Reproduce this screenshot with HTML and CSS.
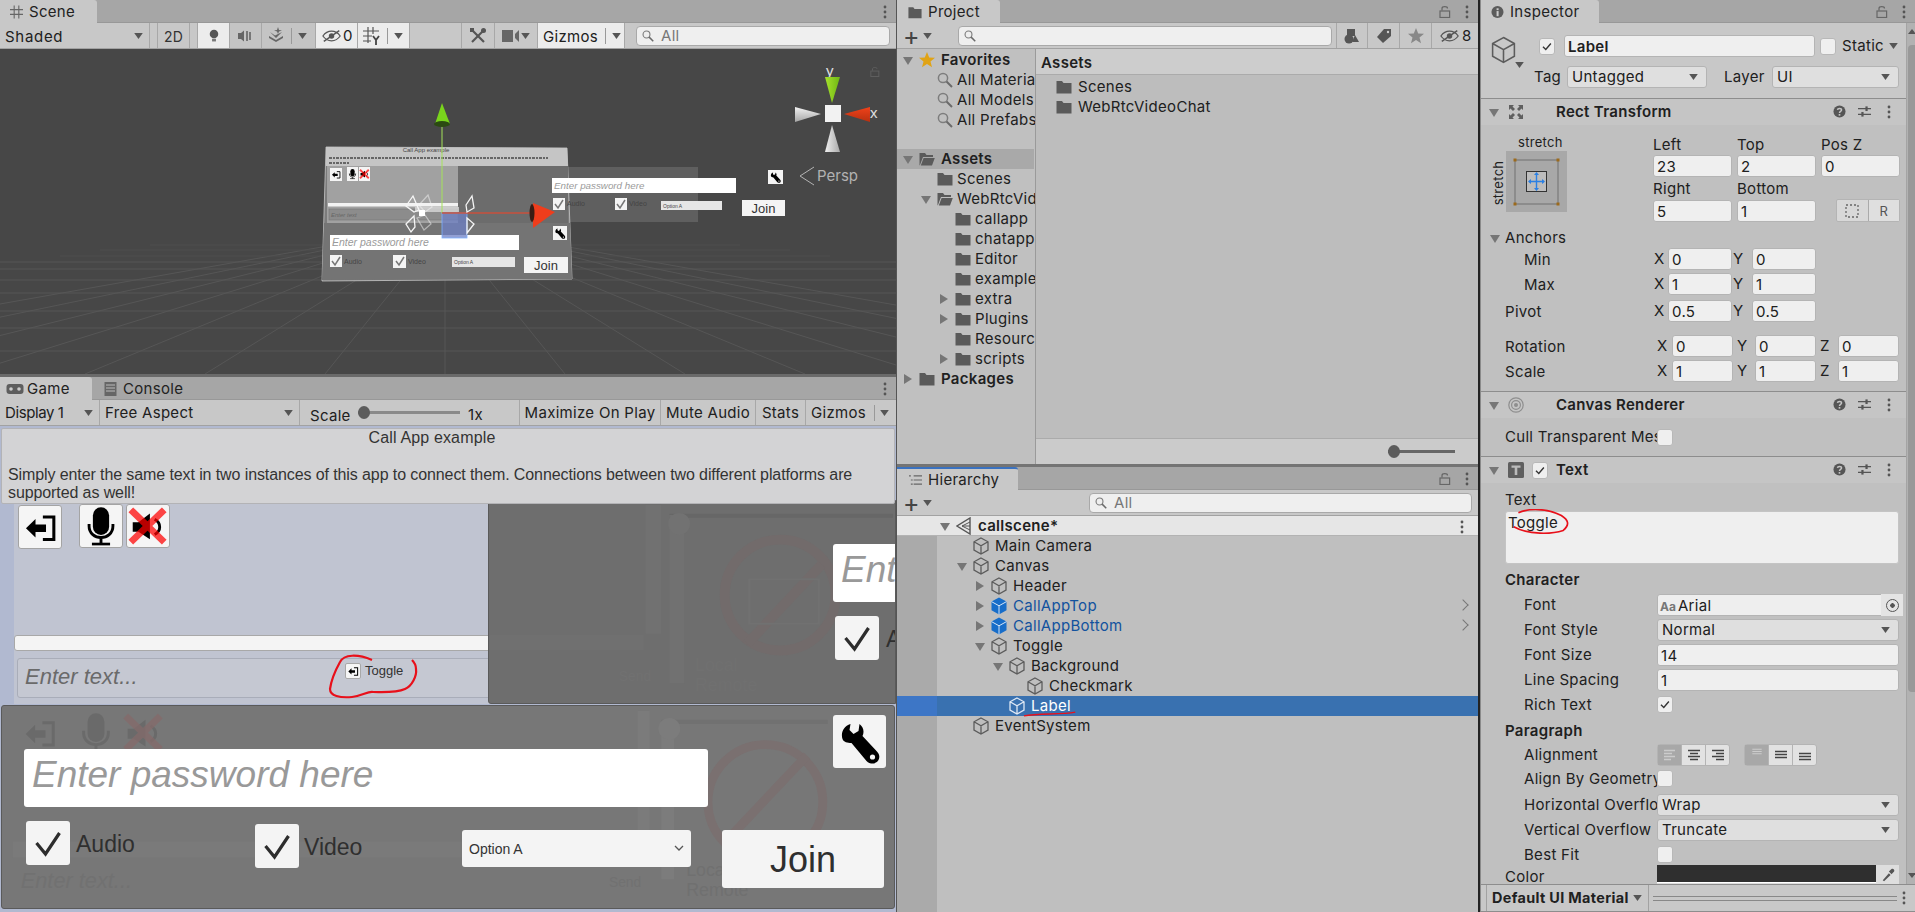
FILE: index.html
```html
<!DOCTYPE html>
<html lang="en">
<head>
<meta charset="utf-8">
<title>Unity Editor</title>
<link rel="stylesheet" href="styles.css">
</head>
<body>
<svg class="defs" width="0" height="0" aria-hidden="true">
  <defs>
    <linearGradient id="cone-h" x1="0" x2="1" y1="0" y2="0"><stop offset="0" stop-color="#f0f0f0"/><stop offset="1" stop-color="#a9a9a9"/></linearGradient>
    <linearGradient id="cone-v" x1="0" x2="0" y1="0" y2="1"><stop offset="0" stop-color="#f2f2f2"/><stop offset="1" stop-color="#a6a6a6"/></linearGradient>
    <linearGradient id="cone-r" x1="0" x2="0" y1="0" y2="1"><stop offset="0" stop-color="#f0421a"/><stop offset="1" stop-color="#b83010"/></linearGradient>
    <linearGradient id="cone-g" x1="0" x2="1" y1="0" y2="0"><stop offset="0" stop-color="#a6e22c"/><stop offset="1" stop-color="#6fb714"/></linearGradient>
  </defs>
  <symbol id="cube" viewBox="0 0 16 18"><path d="M8 1 15 4.800V13L8 17 1 13V4.800ZM1 4.800 8 8.800 15 4.800M8 8.800V17" fill="none" stroke="#5c5c5c" stroke-width="1.300"/></symbol>
  <symbol id="cube-w" viewBox="0 0 16 18"><path d="M8 1 15 4.800V13L8 17 1 13V4.800ZM1 4.800 8 8.800 15 4.800M8 8.800V17" fill="none" stroke="#dfe8f5" stroke-width="1.300"/></symbol>
  <symbol id="cube-b" viewBox="0 0 16 18"><path d="M8 .5 15.500 4.600V13.200L8 17.500.5 13.200V4.600Z" fill="#176dc9"/><path d="M.5 4.600 8 8.800 15.500 4.600M8 8.800V17.500" fill="none" stroke="#d5e5f5" stroke-width="1"/></symbol>
  <symbol id="folder" viewBox="0 0 16 14"><path d="M.5 1H6L7.500 3H15.500V13.500H.5Z" fill="#5a5a5a"/></symbol>
  <symbol id="folder-o" viewBox="0 0 16 14"><path d="M.5 1H6L7.500 3H14V5H4L.9 13.200H.5ZM4.600 6H15.800L13 13.500H1.800Z" fill="#5a5a5a"/></symbol>
  <symbol id="mag" viewBox="0 0 16 16"><circle cx="6" cy="6" r="4.600" fill="none" stroke="#7d7d7d" stroke-width="1.500"/><path d="M9.500 9.500 15 15" stroke="#6a6a6a" stroke-width="2"/></symbol>
  <symbol id="lock" viewBox="0 0 12 13"><path d="M3 5.500V3.400C3 1 8.500 1 8.500 3.400" fill="none" stroke="#666" stroke-width="1.200"/><rect x="1" y="6" width="9.600" height="6.500" fill="none" stroke="#666" stroke-width="1.200"/></symbol>
  <symbol id="dots" viewBox="0 0 4 14"><circle cx="2" cy="2" r="1.400" fill="#555"/><circle cx="2" cy="7" r="1.400" fill="#555"/><circle cx="2" cy="12" r="1.400" fill="#555"/></symbol>
  <symbol id="help" viewBox="0 0 14 14"><circle cx="7" cy="7" r="6.500" fill="#555"/><path d="M4.800 5.300C5 3.200 9.200 3.200 9.200 5.400 9.200 7 7 6.800 7 8.600" fill="none" stroke="#c4c4c4" stroke-width="1.600"/><rect x="6.100" y="9.700" width="1.800" height="1.800" fill="#c4c4c4"/></symbol>
  <symbol id="sliders" viewBox="0 0 14 13"><path d="M0 3.500H14M0 9.500H14" stroke="#555" stroke-width="1.400"/><rect x="8" y="1" width="2.400" height="5" fill="#555"/><rect x="3.600" y="7" width="2.400" height="5" fill="#555"/></symbol>
  <symbol id="check" viewBox="0 0 16 16"><path d="M3.400 8.400 6.600 11.400 12.400 4.600" fill="none" stroke="#333" stroke-width="1.600"/></symbol>
  <symbol id="bigcheck" viewBox="0 0 43 44"><path d="M10 22 19 33 33 12" fill="none" stroke="#2d2d2d" stroke-width="3.200"/></symbol>
  <symbol id="exit" viewBox="0 0 44 44"><path d="M7.300 23.300 17.300 13.500V19.300H28.300V27.300H17.300V33Z" fill="#000"/><path d="M25 11.500H36.500V35H25" fill="none" stroke="#000" stroke-width="3.200"/></symbol>
  <symbol id="mic" viewBox="0 0 44 44"><rect x="13.500" y="2.400" width="17" height="29" rx="8.500" fill="#000"/><path d="M9.500 20V22C9.500 38 34.500 38 34.500 22V20" fill="none" stroke="#000" stroke-width="3"/><path d="M22 35V40" stroke="#000" stroke-width="3"/><rect x="12.500" y="39.500" width="19" height="2.800" fill="#000"/></symbol>
  <symbol id="mute" viewBox="0 0 44 44"><path d="M6 18H12L24 9V36L12 28H6Z" fill="#000"/><path d="M29 15C36 19 36 27 29 31" fill="none" stroke="#000" stroke-width="3"/><path d="M4 5 39 39M39 5 4 39" stroke="#ff0000" stroke-opacity=".72" stroke-width="7"/></symbol>
  <symbol id="wrench" viewBox="0 0 52 53"><path d="M17 9C10 11 7 18 9 24 10 27 14 28 18 28L33 46C37 50 43 49 45 45 47 41 45 38 43 36L29 21C31 17 30 12 26 9L25 16 20 19 16 15Z" fill="#000"/><circle cx="39" cy="42" r="2.600" fill="#f4f4f4"/></symbol>
  <symbol id="arrow-d" viewBox="0 0 10 7"><path d="M0 0H10L5 7Z" fill="currentColor"/></symbol>
</svg>

<div class="app">

  <!-- Left column -->
  <div class="col col-left">
    <section class="panel">
      <div class="tabbar">
        <div class="tab tab-scene">
          <svg class="tab-ico" viewBox="0 0 14 14"><path d="M4.500 0V14M9.500 0V14M0 4.500H14M0 9.500H14" stroke="#666" stroke-width="1.200"/></svg>
          <span>Scene</span>
        </div>
        <svg class="tabdots"><use href="#dots"/></svg>
      </div>
      <div class="toolbar">
        <div class="tb tb-shaded"><span>Shaded</span><svg class="tri"><use href="#arrow-d"/></svg></div>
        <div class="tb tb-gap8"></div>
        <div class="tb tb-2d">2D</div>
        <div class="tb tb-gap8 nob"></div>
        <div class="tb tb-32 on"><svg viewBox="0 0 14 18" class="ic14"><circle cx="7" cy="6.500" r="5.500" fill="#555"/><rect x="4.500" y="12.500" width="5" height="3.500" fill="#777"/></svg></div>
        <div class="tb tb-32 dark"><svg viewBox="0 0 18 16" class="ic18"><path d="M1 5H4L7 2.500V13.500L4 11H1Z" fill="#666"/><path d="M10 3V13M13 4V12" stroke="#777" stroke-width="2"/></svg></div>
        <div class="tb tb-54 dark"><svg viewBox="0 0 18 18" class="ic18"><path d="M2 9 9 13 16 9V11L9 15 2 11Z" fill="#666"/><path d="M3 5 8 8.500 15 5 9 11Z" fill="#666"/><path d="M11 0 12 3 15 3.500 12 4.500 11 7 10 4.500 7 3.500 10 3Z" fill="#666"/></svg><i class="vsep"></i><svg class="tri"><use href="#arrow-d"/></svg></div>
        <div class="tb tb-42 on"><svg viewBox="0 0 22 16" class="ic22"><path d="M1 8C6 1 15 1 20 8 15 15 6 15 1 8Z" fill="none" stroke="#555" stroke-width="1.400"/><circle cx="10.500" cy="8" r="3" fill="#555"/><path d="M2 14 19 2" stroke="#555" stroke-width="1.600"/></svg><span class="n0">0</span></div>
        <div class="tb tb-52 on"><svg viewBox="0 0 18 18" class="ic18"><path d="M5 0V16M10 0V7M0 4H16M0 9H9M0 14H8" stroke="#555" stroke-width="1.200"/><path d="M10 9 13 13 16 9M13 13V18" fill="none" stroke="#444" stroke-width="1.800"/></svg><i class="vsep"></i><svg class="tri"><use href="#arrow-d"/></svg></div>
        <div class="tb tb-fill"></div>
        <div class="tb tb-33"><svg viewBox="0 0 18 18" class="ic18"><path d="M3 15 15 3" stroke="#555" stroke-width="2.200"/><path d="M3 3 15 15" stroke="#555" stroke-width="2.200"/><circle cx="14.500" cy="3.500" r="2.500" fill="#555"/><rect x="1" y="1" width="4" height="4" fill="#555"/></svg></div>
        <div class="tb tb-43"><svg viewBox="0 0 18 14" class="ic18"><rect y="1" width="11" height="12" fill="#666"/><path d="M13 5 17 1V13L13 9Z" fill="#666"/></svg><svg class="tri"><use href="#arrow-d"/></svg></div>
        <div class="tb tb-87 on"><span>Gizmos</span><i class="vsep"></i><svg class="tri"><use href="#arrow-d"/></svg></div>
        <div class="searchbox sb-scene"><svg class="mag"><use href="#mag"/></svg><span>All</span></div>
      </div>
      <div class="viewport">
        <svg class="scene" viewBox="0 49 896 325">
          <rect x="0" y="49" width="896" height="325" fill="#474747"/>
          <path class="grid" d="M429 245 325 374M413 245 205 374M397 245 85 374M381 245-35 374M365 245-155 374M349 245-275 374M333 245-395 374M461 245 565 374M477 245 685 374M493 245 805 374M509 245 925 374M525 245 1045 374M541 245 1165 374M557 245 1285 374M445 245V374"/>
          <path class="grid" d="M0 262H896M0 269H896M0 280H896M0 293H896M0 311H896M0 328H896M0 351H896"/>
          <path class="gridf" d="M150 245H740M100 250H790M60 256H830"/>
          <!-- far panel -->
          <rect x="568" y="167" width="130" height="55" fill="#5f5f5f"/>
          <!-- main plane -->
          <polygon points="326,147 567,148 572,279 322,281" fill="#7b7b7b" stroke="#c8c8c8" stroke-width=".8"/>
          <polygon points="326,147 567,148 568,166 326,166" fill="#c5c5c5"/>
          <rect x="327" y="166" width="131" height="57" fill="#a1a1a1"/>
          <rect x="458" y="166" width="110" height="57" fill="#6c6c6c"/>
          <polygon points="324,223 570,223 572,279 322,280" fill="#747474"/>
          <text class="m" x="426" y="152">Call App example</text>
          <path class="tinyl" d="M329 158H548M329 163H350" />
          <rect class="wbtn" x="330" y="168" width="12" height="13"/>
          <use href="#exit" x="330" y="168" width="12" height="13"/>
          <rect class="wbtn" x="347" y="167" width="11" height="14"/>
          <use href="#mic" x="347" y="167" width="11" height="14"/>
          <rect class="wbtn" x="359" y="167" width="11" height="14"/>
          <use href="#mute" x="359" y="167" width="11" height="14"/>
          <rect x="328" y="203" width="130" height="3.500" fill="#f2f2f2"/>
          <rect x="329" y="209" width="129" height="11" fill="#8c8c8c" stroke="#777" stroke-width=".6"/>
          <text class="m2" x="331" y="217">Enter text</text>
          <!-- bottom panel widgets -->
          <rect x="330" y="235" width="189" height="15" fill="#fff"/>
          <text class="ph" x="332" y="246">Enter password here</text>
          <rect class="wbtn" x="330" y="255" width="12" height="12"/><path class="ck" d="M332 261 335 265 340 257"/>
          <text class="m3" x="344" y="264">Audio</text>
          <rect class="wbtn" x="393" y="255" width="13" height="13"/><path class="ck" d="M396 261 399 265 404 257"/>
          <text class="m3" x="408" y="264">Video</text>
          <rect x="452" y="257" width="63" height="10" fill="#e6e6e6"/>
          <text class="m2d" x="454" y="264">Option A</text>
          <rect class="wbtn" x="524" y="257" width="44" height="16"/>
          <text class="join" x="546" y="270">Join</text>
          <rect class="wbtn" x="553" y="226" width="14" height="14"/>
          <use href="#wrench" x="553" y="226" width="14" height="14"/>
          <!-- far widgets -->
          <rect x="552" y="178" width="184" height="15" fill="#fff"/>
          <text class="ph ph2" x="554" y="189">Enter password here</text>
          <rect class="wbtn" x="553" y="198" width="12" height="12"/><path class="ck" d="M555 204 558 208 563 200"/>
          <text class="m3" x="567" y="206">Audio</text>
          <rect class="wbtn" x="615" y="198" width="12" height="12"/><path class="ck" d="M617 204 620 208 625 200"/>
          <text class="m3" x="629" y="206">Video</text>
          <rect x="661" y="201" width="61" height="9" fill="#e6e6e6"/>
          <text class="m2d" x="663" y="208">Option A</text>
          <rect class="wbtn" x="742" y="200" width="43" height="16"/>
          <text class="join" x="763.500" y="213">Join</text>
          <rect class="wbtn" x="768" y="170" width="15" height="14"/>
          <use href="#wrench" x="768" y="170" width="15" height="14"/>
          <!-- handles -->
          <rect x="442" y="213" width="25" height="25" fill="#6d80c5" fill-opacity=".75" stroke="#7db0ff" stroke-width=".8"/>
          <rect x="415" y="207" width="44" height="5" fill="#d8d8d8" opacity=".8"/>
          <path d="M442 125V213" stroke="#a4e35a" stroke-width="1"/>
          <path d="M442 213H533" stroke="#c9503c" stroke-width="1.500"/>
          <polygon points="442,103 435,124 450,124" fill="#79d41c"/>
          <ellipse cx="442" cy="124" rx="8" ry="3" fill="#2b4a12"/>
          <polygon points="555,212 533,203 533,228" fill="#ef3d1c"/>
          <ellipse cx="532" cy="213" rx="2.500" ry="9" fill="#3a1d14"/>
          <g fill="none" stroke="#f5f5f5" stroke-width="1.300">
            <polygon points="406,206 413,196 419,210 414,212"/>
            <polygon points="466,205 472,196 474,208 467,212"/>
            <polygon points="406,224 414,216 415,227 411,232"/>
            <polygon points="467,218 474,224 467,233"/>
            <polygon points="419,205 428,195 432,207 425,212" opacity=".5"/>
            <polygon points="417,218 425,215 431,224 424,230" opacity=".5"/>
          </g>
          <rect x="419" y="210" width="6" height="6" fill="#fff"/>
          <!-- orientation gizmo -->
          <text class="gl" x="826" y="76">y</text>
          <polygon points="825,77 840,77 832,103" fill="url(#cone-g)"/>
          <polygon points="870,107 870,122 844,114" fill="url(#cone-r)"/>
          <polygon points="795,107 795,122 821,114" fill="url(#cone-v)"/>
          <polygon points="825,152 840,152 832,125" fill="url(#cone-h)"/>
          <rect x="825" y="105" width="16" height="17" fill="#f2f2f2"/>
          <text class="gl" x="870" y="118">x</text>
          <use href="#lock" x="870" y="66" width="10" height="11" opacity=".75"/>
          <path d="M814 167 800 176 814 185" fill="none" stroke="#b4b4b4" stroke-width="1"/>
          <text class="persp" x="817" y="181">Persp</text>
        </svg>
      </div>
    </section>

    <div class="hgap"></div>

    <section class="panel panel-game">
      <div class="tabbar">
        <div class="tab tab-game">
          <svg class="tab-ico wide" viewBox="0 0 18 12"><rect x=".5" y="1" width="17" height="10" rx="3" fill="#5e5e5e"/><circle cx="5" cy="6" r="1.800" fill="#cdcdcd"/><circle cx="13" cy="6" r="1.800" fill="#cdcdcd"/></svg>
          <span>Game</span>
        </div>
        <div class="tab off tab-console">
          <svg class="tab-ico" viewBox="0 0 12 14"><rect width="12" height="14" fill="#666"/><path d="M1.500 3H10.500M1.500 6H10.500M1.500 9H10.500" stroke="#bbb"/></svg>
          <span>Console</span>
        </div>
        <svg class="tabdots"><use href="#dots"/></svg>
      </div>
      <div class="toolbar tb-game">
        <div class="tb g-disp"><span>Display 1</span><svg class="tri"><use href="#arrow-d"/></svg></div>
        <div class="tb g-aspect"><span>Free Aspect</span><svg class="tri"><use href="#arrow-d"/></svg></div>
        <div class="tb g-scale"><span class="sc-label">Scale</span><span class="sc-track"><i class="sc-knob"></i></span><span class="sc-val">1x</span></div>
        <div class="tb g-max">Maximize On Play</div>
        <div class="tb g-mute">Mute Audio</div>
        <div class="tb g-stats">Stats</div>
        <div class="tb g-giz"><span>Gizmos</span><i class="vsep"></i><svg class="tri"><use href="#arrow-d"/></svg></div>
      </div>
      <div class="game">
        <div class="g-head">
          <div class="g-title">Call App example</div>
          <div class="g-body">Simply enter the same text in two instances of this app to connect them. Connections between two different platforms are supported as well!</div>
        </div>
        <div class="g-call">
          <div class="g-btns">
            <div class="g-btn g-exit"><svg><use href="#exit"/></svg></div>
            <div class="g-btn g-mic"><svg><use href="#mic"/></svg></div>
            <div class="g-btn g-mute2"><svg><use href="#mute"/></svg></div>
          </div>
          <div class="g-progress"></div>
          <div class="g-input"><span>Enter text...</span></div>
        </div>

        <div class="g-bottom">
          <svg class="ghost" viewBox="0 0 895 204">
            <g opacity=".1">
              <use href="#exit" x="14" y="6" width="42" height="42"/>
              <use href="#mic" x="70" y="5" width="44" height="44"/>
              <use href="#mute" x="118" y="5" width="44" height="44"/>
            </g>
            <rect x="639" y="5" width="12" height="130" fill="#7b7b7b"/>
            <rect x="663" y="17" width="13" height="158" fill="#7c7c7c"/>
            <rect x="663" y="14" width="168" height="4" fill="#717171"/>
            <circle cx="671" cy="23" r="11" fill="#7c7c7c"/>
            <circle cx="768" cy="97" r="58" fill="none" stroke="#7a7070" stroke-width="9"/>
            <path d="M725 140 810 50" stroke="#7a7070" stroke-width="9"/>
            <rect x="8" y="137" width="630" height="16" fill="#7a7a7a"/>
            <text class="gh-t" x="16" y="184">Enter text...</text>
            <text class="gh-s" x="610" y="183">Send</text>
            <text class="gh-l" x="688" y="172">Local</text>
            <text class="gh-l" x="688" y="192">Remote</text>
          </svg>
          <div class="b-wrench"><svg><use href="#wrench"/></svg></div>
          <div class="b-pass"><span>Enter password here</span></div>
          <div class="b-row">
            <div class="b-check"><svg><use href="#bigcheck"/></svg></div>
            <span class="b-lab b-audio">Audio</span>
            <div class="b-check b-video"><svg><use href="#bigcheck"/></svg></div>
            <span class="b-lab b-vid">Video</span>
            <div class="b-drop"><span>Option A</span><svg viewBox="0 0 10 7"><path d="M1 1 5 5 9 1" fill="none" stroke="#555" stroke-width="1.300"/></svg></div>
            <div class="b-join">Join</div>
          </div>
        </div>

        <div class="g-right">
          <svg class="ghost" viewBox="0 0 408 204">
            <rect x="157" y="4" width="16" height="130" fill="#717171"/>
            <rect x="181" y="13" width="226" height="4" fill="#676767"/>
            <rect x="181" y="14" width="15" height="170" fill="#717171"/>
            <circle cx="191" cy="23" r="11" fill="#727272"/>
            <circle cx="293" cy="95" r="56" fill="none" stroke="#726b6b" stroke-width="10"/>
            <path d="M260 144 335 64" stroke="#726b6b" stroke-width="10"/>
            <rect x="262" y="79" width="70" height="45" fill="none" stroke="#717171" stroke-width="2"/>
            <rect x="0" y="135" width="155" height="16" fill="#707070"/>
            <text class="gh-s" x="130" y="182">Send</text>
            <text class="gh-l" x="207" y="172">Local</text>
            <text class="gh-l" x="207" y="192">Remote</text>
          </svg>
          <div class="r-pass"><span>Ent</span></div>
          <div class="r-row">
            <div class="b-check"><svg><use href="#bigcheck"/></svg></div>
            <span class="b-lab">A</span>
          </div>
        </div>

        <div class="g-toggle">
          <div class="g-tbox"><svg><use href="#exit"/></svg></div>
          <span>Toggle</span>
        </div>
        <svg class="scribble" viewBox="0 425 896 487">
          <path d="M372 659C358 653 344 653 340 661 335 670 331 681 330 688 330 695 340 697 352 696 362 695 368 690 373 691 384 691 396 692 405 688 412 685 417 675 416 668 416 664 414 661 412 659" fill="none" stroke="#e8101a" stroke-width="2.200"/>
        </svg>
      </div>
    </section>
  </div>

  <!-- Middle column -->
  <div class="col col-mid">
    <section class="panel panel-project">
      <div class="tabbar">
        <div class="tab tab-project">
          <svg class="tab-ico folder"><use href="#folder"/></svg>
          <span>Project</span>
        </div>
        <svg class="tablock"><use href="#lock"/></svg>
        <svg class="tabdots"><use href="#dots"/></svg>
      </div>
      <div class="toolbar tb-project">
        <div class="plus"><span class="plus-sign">+</span><svg class="tri"><use href="#arrow-d"/></svg></div>
        <div class="searchbox sb-project"><svg class="mag"><use href="#mag"/></svg></div>
        <div class="tb p-btn left-sep"><svg viewBox="0 0 16 16" class="ic16"><rect x="3" y="1" width="8" height="7" fill="#555"/><circle cx="5" cy="11" r="4.500" fill="#555"/><path d="M11 7 15 14H8Z" fill="#555"/></svg></div>
        <div class="tb p-btn"><svg viewBox="0 0 16 16" class="ic16"><path d="M8 1H15V8L7 15 1 9Z" fill="#555"/><circle cx="12" cy="4" r="1.200" fill="#ccc"/></svg></div>
        <div class="tb p-btn"><svg viewBox="0 0 16 16" class="ic16"><path d="M8 0 10.200 5.400 16 5.800 11.500 9.500 13 15.200 8 12.100 3 15.200 4.500 9.500 0 5.800 5.800 5.400Z" fill="#888"/></svg></div>
        <div class="tb p-eye"><svg viewBox="0 0 22 16" class="ic22"><path d="M1 8C6 1 15 1 20 8 15 15 6 15 1 8Z" fill="none" stroke="#555" stroke-width="1.400"/><circle cx="10.500" cy="8" r="3" fill="#555"/><path d="M2 14 19 2" stroke="#555" stroke-width="1.600"/></svg><span>8</span></div>
      </div>
      <div class="proj-body">
        <div class="proj-tree">
          <div class="tr bold l0"><i class="ar down"></i><svg class="ti" viewBox="0 0 16 16"><path d="M8 0 10.200 5.400 16 5.800 11.500 9.500 13 15.200 8 12.100 3 15.200 4.500 9.500 0 5.800 5.800 5.400Z" fill="#e0a315"/></svg><span>Favorites</span></div>
          <div class="tr l1"><i class="ar"></i><svg class="ti"><use href="#mag"/></svg><span>All Materials</span></div>
          <div class="tr l1"><i class="ar"></i><svg class="ti"><use href="#mag"/></svg><span>All Models</span></div>
          <div class="tr l1"><i class="ar"></i><svg class="ti"><use href="#mag"/></svg><span>All Prefabs</span></div>
          <div class="tr-gap"></div>
          <div class="tr bold l0 cur"><i class="ar down"></i><svg class="ti"><use href="#folder-o"/></svg><span>Assets</span></div>
          <div class="tr l1"><i class="ar"></i><svg class="ti"><use href="#folder"/></svg><span>Scenes</span></div>
          <div class="tr l1"><i class="ar down"></i><svg class="ti"><use href="#folder-o"/></svg><span>WebRtcVideoChat</span></div>
          <div class="tr l2"><i class="ar"></i><svg class="ti"><use href="#folder"/></svg><span>callapp</span></div>
          <div class="tr l2"><i class="ar"></i><svg class="ti"><use href="#folder"/></svg><span>chatapp</span></div>
          <div class="tr l2"><i class="ar"></i><svg class="ti"><use href="#folder"/></svg><span>Editor</span></div>
          <div class="tr l2"><i class="ar"></i><svg class="ti"><use href="#folder"/></svg><span>examples</span></div>
          <div class="tr l2"><i class="ar right"></i><svg class="ti"><use href="#folder"/></svg><span>extra</span></div>
          <div class="tr l2"><i class="ar right"></i><svg class="ti"><use href="#folder"/></svg><span>Plugins</span></div>
          <div class="tr l2"><i class="ar"></i><svg class="ti"><use href="#folder"/></svg><span>Resources</span></div>
          <div class="tr l2"><i class="ar right"></i><svg class="ti"><use href="#folder"/></svg><span>scripts</span></div>
          <div class="tr bold l0"><i class="ar right"></i><svg class="ti"><use href="#folder"/></svg><span>Packages</span></div>
        </div>
        <div class="proj-main">
          <div class="crumb">Assets</div>
          <div class="files">
            <div class="file"><svg class="ti"><use href="#folder"/></svg><span>Scenes</span></div>
            <div class="file"><svg class="ti"><use href="#folder"/></svg><span>WebRtcVideoChat</span></div>
          </div>
          <div class="proj-foot"><span class="pf-track"><i class="pf-knob"></i></span></div>
        </div>
      </div>
    </section>

    <div class="hgap mid"></div>

    <section class="panel panel-hier">
      <div class="tabbar">
        <div class="tab tab-hier">
          <svg class="tab-ico" viewBox="0 0 14 12"><path d="M5 1.500H14M5 6H14M5 10.500H14" stroke="#666" stroke-width="1.200"/><path d="M0 1.500H2M2 6H4M2 10.500H4" stroke="#666" stroke-width="1.200"/></svg>
          <span>Hierarchy</span>
        </div>
        <svg class="tablock"><use href="#lock"/></svg>
        <svg class="tabdots"><use href="#dots"/></svg>
      </div>
      <div class="toolbar tb-hier">
        <div class="plus"><span class="plus-sign">+</span><svg class="tri"><use href="#arrow-d"/></svg></div>
        <div class="searchbox sb-hier"><svg class="mag"><use href="#mag"/></svg><span>All</span></div>
      </div>
      <div class="hier-body">
        <div class="tr bold scene-row lm"><i class="ar down"></i><svg class="ti" viewBox="0 0 16 18"><path d="M14 1V17L1 9Z" fill="none" stroke="#555" stroke-width="1.400"/><path d="M14 9 6 9M14 5 6 9 14 13" stroke="#555" fill="none"/></svg><span>callscene*</span><svg class="rowdots"><use href="#dots"/></svg></div>
        <div class="tr l0"><i class="ar"></i><svg class="ti"><use href="#cube"/></svg><span>Main Camera</span></div>
        <div class="tr l0"><i class="ar down"></i><svg class="ti"><use href="#cube"/></svg><span>Canvas</span></div>
        <div class="tr l1"><i class="ar right"></i><svg class="ti"><use href="#cube"/></svg><span>Header</span></div>
        <div class="tr l1 blue"><i class="ar right"></i><svg class="ti"><use href="#cube-b"/></svg><span>CallAppTop</span><i class="chev"></i></div>
        <div class="tr l1 blue"><i class="ar right"></i><svg class="ti"><use href="#cube-b"/></svg><span>CallAppBottom</span><i class="chev"></i></div>
        <div class="tr l1"><i class="ar down"></i><svg class="ti"><use href="#cube"/></svg><span>Toggle</span></div>
        <div class="tr l2"><i class="ar down"></i><svg class="ti"><use href="#cube"/></svg><span>Background</span></div>
        <div class="tr l3"><i class="ar"></i><svg class="ti"><use href="#cube"/></svg><span>Checkmark</span></div>
        <div class="tr l2 sel"><i class="ar"></i><svg class="ti"><use href="#cube-w"/></svg><span>Label</span>
          <svg class="underline" viewBox="0 0 60 8"><path d="M1 6C18 3 40 5 56 2" fill="none" stroke="#e8101a" stroke-width="1.600"/></svg>
        </div>
        <div class="tr l0"><i class="ar"></i><svg class="ti"><use href="#cube"/></svg><span>EventSystem</span></div>
      </div>
    </section>
  </div>

  <i class="divider"></i>

  <!-- Inspector -->
  <div class="col col-right">
    <section class="panel panel-insp">
      <div class="tabbar">
        <div class="tab tab-insp">
          <svg class="tab-ico" viewBox="0 0 14 14"><circle cx="7" cy="7" r="6.500" fill="#5b5b5b"/><rect x="6" y="6" width="2.200" height="5.500" fill="#ccc"/><rect x="6" y="3" width="2.200" height="2" fill="#ccc"/></svg>
          <span>Inspector</span>
        </div>
        <svg class="tablock"><use href="#lock"/></svg>
        <svg class="tabdots"><use href="#dots"/></svg>
      </div>
      <div class="insp-wrap">
        <div class="insp-scroll">
          <div class="obj-head">
            <svg class="obj-cube" viewBox="0 0 16 18"><path d="M8 1 15 4.800V13L8 17 1 13V4.800ZM1 4.800 8 8.800 15 4.800M8 8.800V17" fill="none" stroke="#5c5c5c" stroke-width="1"/></svg>
            <svg class="tri obj-tri"><use href="#arrow-d"/></svg>
            <div class="obj-line1">
              <div class="cb"><svg><use href="#check"/></svg></div>
              <div class="f f-name">Label</div>
              <div class="cb cb-static"></div>
              <span class="static">Static</span><svg class="tri"><use href="#arrow-d"/></svg>
            </div>
            <div class="obj-line2">
              <span class="t-tag">Tag</span>
              <div class="dd dd-tag"><span>Untagged</span><svg class="tri"><use href="#arrow-d"/></svg></div>
              <span class="t-layer">Layer</span>
              <div class="dd dd-layer"><span>UI</span><svg class="tri"><use href="#arrow-d"/></svg></div>
            </div>
          </div>

          <div class="comp-head">
            <i class="ar down"></i>
            <svg class="comp-ico" viewBox="0 0 16 16"><path d="M1 1 6 1 4.500 2.500 7 5 5 7 2.500 4.500 1 6ZM15 1V6L13.500 4.500 11 7 9 5 11.500 2.500 10 1ZM1 15V10L2.500 11.500 5 9 7 11 4.500 13.500 6 15ZM15 15H10L11.500 13.500 9 11 11 9 13.500 11.500 15 10Z" fill="#5f5f5f"/></svg>
            <span class="comp-title">Rect Transform</span>
            <svg class="c-help"><use href="#help"/></svg><svg class="c-sl"><use href="#sliders"/></svg><svg class="c-dots"><use href="#dots"/></svg>
          </div>
          <div class="rt">
            <div class="rt-top">
              <div class="preset">
                <span class="pre-top">stretch</span>
                <span class="pre-left">stretch</span>
                <svg class="pre-box" viewBox="0 0 61 61">
                  <rect width="61" height="61" fill="#a8a8a8"/>
                  <rect x="9" y="9" width="43" height="44" fill="none" stroke="#707070"/>
                  <rect x="7.500" y="7.500" width="3" height="3" fill="#9c6a1c"/><rect x="50.500" y="7.500" width="3" height="3" fill="#9c6a1c"/><rect x="7.500" y="51.500" width="3" height="3" fill="#9c6a1c"/><rect x="50.500" y="51.500" width="3" height="3" fill="#9c6a1c"/>
                  <rect x="20.500" y="20.500" width="20" height="20" fill="#bdbdbd" stroke="#333"/>
                  <path d="M23 30.500H38M30.500 23V38" stroke="#2b80e4" stroke-width="1.400"/>
                  <path d="M22 30.500 25 28V33ZM39 30.500 36 28V33ZM30.500 21 28 24H33ZM30.500 40 28 37H33Z" fill="#2b80e4"/>
                </svg>
              </div>
              <div class="rt-grid">
                <span class="lab">Left</span><span class="lab">Top</span><span class="lab">Pos Z</span>
                <div class="f">23</div><div class="f">2</div><div class="f">0</div>
                <span class="lab">Right</span><span class="lab">Bottom</span><span></span>
                <div class="f">5</div><div class="f">1</div>
                <div class="btn-pair">
                  <div class="bp"><svg viewBox="0 0 14 14" class="ic14"><rect x="1" y="1" width="12" height="12" fill="none" stroke="#666" stroke-width="1.300" stroke-dasharray="2 2"/></svg></div>
                  <div class="bp">R</div>
                </div>
              </div>
            </div>

            <div class="anch"><i class="ar down"></i><span>Anchors</span></div>
            <div class="vrow two"><span class="lab2">Min</span><div class="xy"><b>X</b><div class="f">0</div><b>Y</b><div class="f">0</div></div></div>
            <div class="vrow two mt3"><span class="lab2">Max</span><div class="xy"><b>X</b><div class="f">1</div><b>Y</b><div class="f">1</div></div></div>
            <div class="vrow two mt5"><span class="lab1">Pivot</span><div class="xy"><b>X</b><div class="f">0.5</div><b>Y</b><div class="f">0.5</div></div></div>
            <div class="vrow three mt13"><span class="lab1">Rotation</span><div class="xyz"><b>X</b><div class="f">0</div><b>Y</b><div class="f">0</div><b>Z</b><div class="f">0</div></div></div>
            <div class="vrow three mt3"><span class="lab1">Scale</span><div class="xyz"><b>X</b><div class="f">1</div><b>Y</b><div class="f">1</div><b>Z</b><div class="f">1</div></div></div>
          </div>

          <div class="comp-head">
            <i class="ar down"></i>
            <svg class="comp-ico" viewBox="0 0 20 20"><circle cx="10" cy="10" r="9" fill="none" stroke="#8e8e8e" stroke-width="1.500"/><circle cx="10" cy="10" r="5.500" fill="none" stroke="#8e8e8e" stroke-width="1.500"/><circle cx="10" cy="10" r="2.500" fill="#8e8e8e"/></svg>
            <span class="comp-title">Canvas Renderer</span>
            <svg class="c-help"><use href="#help"/></svg><svg class="c-sl"><use href="#sliders"/></svg><svg class="c-dots"><use href="#dots"/></svg>
          </div>
          <div class="cr-body">
            <div class="prop p1"><span class="pl">Cull Transparent Mesh</span><div class="cb"></div></div>
          </div>

          <div class="comp-head">
            <i class="ar down"></i>
            <svg class="comp-ico" viewBox="0 0 16 16"><rect width="16" height="16" rx="1.500" fill="#5f5f5f"/><path d="M3.500 3.500H12.500V5.800H9.300V13H6.700V5.800H3.500Z" fill="#bbb"/></svg>
            <div class="cb cb-t"><svg><use href="#check"/></svg></div>
            <span class="comp-title title-t">Text</span>
            <svg class="c-help"><use href="#help"/></svg><svg class="c-sl"><use href="#sliders"/></svg><svg class="c-dots"><use href="#dots"/></svg>
          </div>
          <div class="txt-body">
            <div class="txt-lab">Text</div>
            <div class="textarea">Toggle
              <svg class="ta-scribble" viewBox="0 0 70 30"><path d="M14 4C25-1 45-1 60 7 68 12 69 17 62 23 50 27 25 28 9 19" fill="none" stroke="#e8101a" stroke-width="1.800"/></svg>
            </div>
            <div class="sec">Character</div>
            <div class="prop p2"><span class="pl">Font</span><div class="f f-font"><span class="aa">Aa</span>Arial<i class="target"></i></div></div>
            <div class="prop p2"><span class="pl">Font Style</span><div class="dd"><span>Normal</span><svg class="tri"><use href="#arrow-d"/></svg></div></div>
            <div class="prop p2"><span class="pl">Font Size</span><div class="f">14</div></div>
            <div class="prop p2"><span class="pl">Line Spacing</span><div class="f">1</div></div>
            <div class="prop p2 pcb"><span class="pl">Rich Text</span><div class="cb"><svg><use href="#check"/></svg></div></div>
            <div class="sec sec2">Paragraph</div>
            <div class="prop p2 palign"><span class="pl">Alignment</span>
              <div class="aligns">
                <div class="agrp">
                  <div class="ab on"><svg viewBox="0 0 14 12" class="ic14"><path d="M1 1.500H12M1 4.500H9M1 7.500H12M1 10.500H8" stroke="#ccc" stroke-width="1.300"/></svg></div>
                  <div class="ab"><svg viewBox="0 0 14 12" class="ic14"><path d="M1 1.500H13M3 4.500H11M1 7.500H13M3 10.500H11" stroke="#444" stroke-width="1.300"/></svg></div>
                  <div class="ab"><svg viewBox="0 0 14 12" class="ic14"><path d="M1 1.500H13M5 4.500H13M1 7.500H13M5 10.500H13" stroke="#444" stroke-width="1.300"/></svg></div>
                </div>
                <div class="agrp">
                  <div class="ab on v"><svg viewBox="0 0 14 18" class="ic14"><path d="M1 1.500H13M1 4.500H13M1 7.500H13" stroke="#ccc" stroke-width="1.300"/></svg></div>
                  <div class="ab v"><svg viewBox="0 0 14 12" class="ic14"><path d="M1 2.500H13M1 5.500H13M1 8.500H13" stroke="#444" stroke-width="1.300"/></svg></div>
                  <div class="ab v"><svg viewBox="0 0 14 12" class="ic14"><path d="M1 4.500H13M1 7.500H13M1 10.500H13" stroke="#444" stroke-width="1.300"/></svg></div>
                </div>
              </div>
            </div>
            <div class="prop p2 pcb2"><span class="pl">Align By Geometry</span><div class="cb"></div></div>
            <div class="prop p2"><span class="pl">Horizontal Overflow</span><div class="dd"><span>Wrap</span><svg class="tri"><use href="#arrow-d"/></svg></div></div>
            <div class="prop p2"><span class="pl">Vertical Overflow</span><div class="dd"><span>Truncate</span><svg class="tri"><use href="#arrow-d"/></svg></div></div>
            <div class="prop p2 pcb pcb-last"><span class="pl">Best Fit</span><div class="cb"></div></div>
            <div class="prop p-color"><span class="lab1">Color</span>
              <div class="color-f"><div class="swatch"></div><svg viewBox="0 0 16 16" class="ic14 dropper"><path d="M2 14 9 6 11 8 3.500 15ZM9 4 12 1C14 0 16 2 15 4L12 7Z" fill="#555"/></svg></div>
            </div>
          </div>
        </div>
        <div class="scrollbar"><i class="sb-up"></i><i class="sb-thumb"></i><i class="sb-down"></i></div>
      </div>
      <div class="insp-foot">
        <div class="foot-sel"><span class="foot-label">Default UI Material</span><svg class="tri"><use href="#arrow-d"/></svg></div>
        <i class="foot-lines"></i>
        <svg class="foot-dots"><use href="#dots"/></svg>
      </div>
    </section>
  </div>
</div>
</body>
</html>
```

FILE: styles.css
```css
* { box-sizing: border-box; }
html, body { margin: 0; height: 100%; overflow: hidden; }
body { font: 15px/20px Inter, "Noto Sans", sans-serif; color: #202020; background: #555; letter-spacing: .3px; }
.defs { position: absolute; }
i { display: block; font-style: normal; }
.app { display: flex; width: 1915px; height: 912px; }
.col { display: flex; flex-direction: column; height: 912px; }
.col-left { width: 896px; }
.col-mid { width: 581px; margin-left: 1px; }
.divider { width: 3px; background: #232323; border-right: 1px solid #8a8a8a; }
.col-right { width: 434px; margin-left: 0; flex: 1; }
.panel { display: flex; flex-direction: column; background: #c0c0c0; position: relative; }
.hgap { height: 3px; background: #6a6a6a; }
.hgap.mid { height: 3px; background: #747474; }

/* tabs */
.tabbar { height: 23px; background: #a6a6a6; display: flex; position: relative; flex: none; border-bottom: 1px solid #989898; }
.tab { height: 23px; display: flex; align-items: center; background: #c8c8c8; border-radius: 0 3px 0 0; color: #222; flex: none; font-size: 15px; padding-top: 1px; }
.tab.off { background: transparent; }
.tab-ico { width: 13px; height: 14px; flex: none; margin-right: 6px; }
.tab-ico.wide { width: 18px; height: 12px; margin-right: 3px; }
.tab-scene { width: 97px; padding-left: 10px; }
.tab-game { width: 92px; padding-left: 6px; }
.tab-console { width: 100px; padding-left: 12px; }
.tab-project { width: 103px; padding-left: 11px; }
.tab-project .folder { width: 14px; height: 13px; margin-right: 6px; }
.tab-hier { width: 121px; padding-left: 12px; border-top: 2px solid #3a72c0; }
.tab-insp { width: 118px; padding-left: 10px; }
.tabdots { position: absolute; right: 9px; top: 5px; width: 4px; height: 14px; }
.tablock { position: absolute; right: 27px; top: 5px; width: 12px; height: 13px; }

/* toolbars */
.toolbar { height: 26px; background: #c8c8c8; display: flex; flex: none; border-bottom: 1px solid #a2a2a2; align-items: stretch; }
.tb { display: flex; align-items: center; border-right: 1px solid #a8a8a8; flex: none; white-space: nowrap; }
.tb.nob { border-right: 1px solid #a8a8a8; }
.tb.on { background: #ececec; }
.tb.dark { background: #c4c4c4; }
.tri { width: 9px; height: 6px; color: #555; flex: none; }
.vsep { width: 1px; height: 16px; background: #999; margin: 0 6px 0 7px; flex: none; }
.ic14 { width: 14px; height: 14px; flex: none; }
.ic16 { width: 16px; height: 16px; flex: none; }
.ic18 { width: 18px; height: 18px; flex: none; }
.ic22 { width: 20px; height: 16px; flex: none; }
.tb-shaded { width: 150px; padding: 0 6px 0 5px; justify-content: space-between; }
.tb-shaded span { margin-top: 2px; letter-spacing: .7px; }
.tb-gap8 { width: 8px; }
.tb-2d { width: 32px; justify-content: center; font-size: 14px; color: #333; padding-top: 2px; }
.tb-32 { width: 32px; justify-content: center; }
.tb-54 { width: 54px; padding-left: 5px; }
.tb-42 { width: 42px; padding-left: 6px; justify-content: flex-start; }
.tb-42 .n0 { margin-left: 1px; }
.tb-52 { width: 52px; padding-left: 5px; }
.tb-52 .vsep, .tb-54 .vsep { margin-left: 6px; margin-right: 6px; }
.tb-fill { width: 52px; }
.tb-33 { width: 33px; justify-content: center; }
.tb-43 { width: 43px; padding-left: 7px; gap: 1px; }
.tb-87 { width: 87px; padding-left: 5px; }
.tb-87 span { margin-top: 2px; }
.tb-87 .vsep { margin: 0 6px 0 7px; }
.searchbox { background: #efefef; border: 1px solid #a9a9a9; border-radius: 4px; height: 20px; display: flex; align-items: center; color: #777; flex: none; margin-top: 3px; }
.searchbox .mag { width: 12px; height: 12px; margin: 0 7px 0 5px; }
.sb-scene { width: 254px; margin-left: 11px; }

/* scene */
.viewport { height: 325px; overflow: hidden; flex: none; position: relative; background: #474747; }
.scene { display: block; width: 896px; height: 325px; }
.grid { stroke: #565656; stroke-width: 1; fill: none; }
.gridf { stroke: #4f4f4f; stroke-width: 1; fill: none; }
.scene text { font-family: "Liberation Sans", Arial, sans-serif; letter-spacing: 0; }
.m { font-size: 6px; fill: #444; text-anchor: middle; }
.m2 { font-size: 6px; fill: #666; font-style: italic; }
.m2d { font-size: 5px; fill: #444; }
.m3 { font-size: 7px; fill: #444; }
.ph { font-size: 10.500px; font-style: italic; fill: #9a9a9a; }
.ph2 { font-size: 9.800px; }
.join { font-size: 13px; fill: #333; text-anchor: middle; }
.tinyl { stroke: #666; stroke-width: 2; stroke-dasharray: 3 1 2 1; fill: none; }
.wbtn { fill: #f4f4f4; }
.ck { fill: none; stroke: #777; stroke-width: 1.500; }
.gl { font-size: 15px; fill: #e0e0e0; }
.scene .persp { font-family: Inter, sans-serif; font-size: 15px; fill: #b2b2b2; }

/* game */
.panel-game { flex: 1; }
.g-disp { width: 100px; padding: 0 6px 0 5px; justify-content: space-between; }
.g-disp span { letter-spacing: -.4px; }
.g-aspect { width: 200px; padding: 0 6px 0 5px; justify-content: space-between; }
.g-scale { width: 220px; padding-left: 9px; }
.sc-label { width: 48px; padding-top: 6px; margin-left: 1px; }
.sc-track { display: block; width: 102px; height: 3px; background: #8a8a8a; position: relative; }
.sc-knob { position: absolute; left: 0; top: -5px; width: 12px; height: 13px; border-radius: 50%; background: #5c5c5c; }
.sc-val { margin-left: 8px; padding-top: 4px; }
.g-max { width: 141px; justify-content: center; }
.g-mute { width: 95px; justify-content: center; }
.g-stats { width: 50px; justify-content: center; }
.g-giz { width: 89px; padding-left: 5px; border-right: 0; }
.g-giz .vsep { margin: 0 5px 0 8px; }

.game { position: relative; flex: 1; background: #b1b9d0; overflow: hidden; font-family: "Liberation Sans", Arial, sans-serif; letter-spacing: 0; }
.g-head { margin: 2px 0 0 1px; width: 894px; height: 76px; background: #d3d3d5; border: 1px solid #b3b3b6; border-radius: 2px; padding: 0 6px; font-size: 16px; line-height: 18px; color: #333; position: relative; z-index: 1; }
.g-title { text-align: center; height: 37px; padding-right: 32px; letter-spacing: .15px; }
.g-body { width: 880px; letter-spacing: -.1px; }
.g-call { margin: 0 0 0 14px; height: 200px; background: #c0c4d1; position: relative; }
.g-btns { display: flex; align-items: flex-start; padding-left: 4px; }
.g-btn { width: 44px; height: 44px; background: #f5f5f5; border: 1px solid #a4a4a4; border-radius: 3px; }
.g-btn svg { display: block; width: 100%; height: 100%; }
.g-exit { margin-top: 1px; }
.g-mic { margin-left: 17px; }
.g-mute2 { margin-left: 3px; }
.g-progress { height: 16px; margin-top: 86px; background: #f4f4f4; border: 1px solid #a8a8a8; border-radius: 3px; }
.g-input { height: 40px; margin: 7px 0 0 3px; background: #c5c8d2; border: 1px solid #a9adb9; border-radius: 3px; padding-left: 7px; font-size: 22px; line-height: 36px; font-style: italic; color: #6a6a6a; }

.g-bottom { margin: 1px 0 0 1px; width: 894px; height: 204px; position: relative; background: #777; border: 1px solid #5a5a5a; border-radius: 3px; }
.ghost { position: absolute; left: 0; top: 0; width: 100%; height: 100%; }
.ghost text { font-family: "Liberation Sans", Arial, sans-serif; }
.gh-t { font-size: 22px; font-style: italic; fill: #717171; }
.gh-s { font-size: 14px; fill: #717171; }
.gh-l { font-size: 18px; fill: #707070; }
.b-wrench { position: absolute; left: 831px; top: 9px; width: 53px; height: 53px; background: #f4f4f4; border-radius: 3px; }
.b-wrench svg { display: block; width: 100%; height: 100%; }
.b-pass { position: relative; margin: 43px 0 0 22px; width: 684px; height: 58px; background: #fff; border-radius: 3px; padding-left: 8px; font-size: 37px; line-height: 52px; font-style: italic; color: #999; }
.b-row { position: relative; display: flex; align-items: flex-start; margin: 14px 0 0 24px; }
.b-check { width: 44px; height: 44px; background: #f4f4f4; border-radius: 3px; flex: none; }
.b-check svg { display: block; width: 100%; height: 100%; }
.b-lab { font-size: 23px; line-height: 28px; color: #2f2f2f; flex: none; }
.b-audio { margin: 9px 0 0 6px; width: 179px; }
.b-video { margin-top: 3px; }
.b-vid { margin: 12px 0 0 5px; width: 158px; }
.b-drop { width: 229px; height: 37px; margin-top: 9px; background: #f4f4f4; border-radius: 3px; padding: 0 7px; display: flex; justify-content: space-between; align-items: center; font-size: 14px; color: #333; flex: none; }
.b-drop svg { width: 10px; height: 7px; }
.b-join { width: 162px; height: 58px; margin: 9px 0 0 31px; background: #f4f4f4; border-radius: 3px; font-size: 36px; line-height: 60px; text-align: center; color: #2f2f2f; flex: none; }

.g-right { position: absolute; left: 488px; top: 74px; width: 408px; height: 204px; background: #6e6e6e; border: 1px solid #5a5a5a; border-radius: 3px 0 0 3px; overflow: hidden; }
.r-pass { position: absolute; left: 344px; top: 43px; width: 100px; height: 58px; background: #fff; border-radius: 3px; padding-left: 8px; font-size: 37px; line-height: 52px; font-style: italic; color: #999; }
.r-row { position: absolute; left: 346px; top: 115px; display: flex; }
.r-row .b-lab { margin: 9px 0 0 7px; }

.g-toggle { position: absolute; left: 345px; top: 235px; display: flex; align-items: center; font-size: 13px; color: #333; }
.g-tbox { width: 16px; height: 16px; background: #f5f5f5; border: 1px solid #a8a8a8; border-radius: 2px; margin-right: 4px; }
.g-tbox svg { display: block; width: 100%; height: 100%; }
.scribble { position: absolute; left: 0; top: 0; width: 896px; height: 487px; pointer-events: none; }

/* project */
.panel-project { height: 464px; flex: none; }
.tb-project, .tb-hier { align-items: stretch; }
.plus { width: 61px; padding-left: 6px; display: flex; align-items: center; gap: 3px; flex: none; }
.plus-sign { font-size: 25px; line-height: 22px; color: #444; font-weight: 400; }
.tb-hier .plus { width: 192px; }
.sb-project { width: 374px; }
.sb-hier { width: 383px; }
.left-sep { border-left: 1px solid #a8a8a8; margin-left: 4px; }
.p-btn { width: 32px; justify-content: center; }
.p-eye { width: 44px; padding-left: 8px; border-right: 0; gap: 2px; }
.proj-body { display: flex; height: 415px; }
.proj-tree { width: 139px; background: #c0c0c0; border-right: 1px solid #9a9a9a; overflow: hidden; flex: none; padding-top: 1px; }
.tr { height: 20px; display: flex; align-items: center; white-space: nowrap; position: relative; flex: none; }
.tr.bold { font-weight: 600; }
.ar { width: 14px; height: 14px; flex: none; position: relative; }
.ar.down::after { content: ""; position: absolute; left: 2px; top: 4px; border: 5px solid transparent; border-top: 8px solid #767676; border-bottom: 0; }
.ar.right::after { content: ""; position: absolute; left: 3px; top: 2px; border: 5px solid transparent; border-left: 8px solid #767676; border-right: 0; }
.ti { width: 16px; height: 16px; margin-left: 4px; flex: none; }
.tr span { margin-left: 6px; }
.proj-tree .l0 { padding-left: 4px; }
.proj-tree .l1 { padding-left: 22px; }
.proj-tree .l2 { padding-left: 40px; }
.proj-tree .tr span { margin-left: 4px; }
.proj-tree .bold span { margin-left: 6px; }
.tr-gap { height: 19px; }
.tr.cur { background: #a9a9a9; margin-right: 1px; }
.proj-main { flex: 1; display: flex; flex-direction: column; background: #bdbdbd; }
.crumb { height: 26px; flex: none; background: #cdcdcd; border-bottom: 1px solid #ababab; padding-left: 5px; line-height: 27px; font-weight: 600; }
.files { flex: 1; padding-top: 2px; }
.file { height: 20px; display: flex; align-items: center; padding-left: 20px; }
.file .ti { margin-left: 0; }
.file span { margin-left: 6px; }
.proj-foot { height: 26px; flex: none; background: #cbcbcb; border-top: 1px solid #ababab; position: relative; }
.pf-track { position: absolute; left: 352px; top: 11px; width: 67px; height: 3px; background: #666; display: block; }
.pf-knob { position: absolute; left: 0; top: -5px; width: 12px; height: 13px; border-radius: 50%; background: #5c5c5c; }

/* hierarchy */
.panel-hier { flex: 1; min-height: 0; }
.sb-hier { margin-left: 0; }
.hier-body { flex: 1; background: linear-gradient(90deg, #aaa 40px, #bfbfbf 40px); }
.hier-body .ti { height: 18px; }
.hier-body .lm { padding-left: 41px; height: 20px; }
.hier-body .l0 { padding-left: 58px; }
.hier-body .l1 { padding-left: 76px; }
.hier-body .l2 { padding-left: 94px; }
.hier-body .l3 { padding-left: 112px; }
.scene-row { background: #e6e6e6; border-bottom: 1px solid #b3b3b3; }
.rowdots { position: absolute; right: 14px; top: 4px; width: 4px; height: 14px; }
.blue span { color: #12529e; }
.chev { position: absolute; right: 11px; top: 5px; width: 8px; height: 8px; border-top: 1.500px solid #777; border-right: 1.500px solid #777; transform: rotate(45deg); }
.sel { background: linear-gradient(90deg, #3d76c6 40px, #3971b0 40px); color: #fff; }
.underline { position: absolute; left: 126px; top: 14px; width: 56px; height: 8px; }

/* inspector */
.panel-insp { height: 912px; }
.tab-insp .tab-ico { margin-right: 6px; }
.insp-wrap { display: flex; flex: 1; min-height: 0; background: #c0c0c0; }
.insp-scroll { width: 425px; flex: none; overflow: hidden; }
.scrollbar { flex: 1; background: #b2b2b2; position: relative; border-left: 1px solid #a4a4a4; }
.sb-thumb { position: absolute; left: 1px; right: 0; top: 22px; height: 647px; background: #999; border-radius: 4px 0 0 4px; }
.sb-up, .sb-down { position: absolute; left: 1px; width: 0; height: 0; border: 4px solid transparent; }
.sb-up { top: 6px; border-bottom: 5px solid #555; border-top: 0; }
.sb-down { bottom: 6px; border-top: 5px solid #555; border-bottom: 0; }
.obj-head { height: 76px; background: #c8c8c8; border-bottom: 1px solid #8d8d8d; position: relative; padding: 12px 7px 0 0; }
.obj-cube { position: absolute; left: 10px; top: 13px; width: 25px; height: 28px; }
.obj-tri { position: absolute; left: 34px; top: 39px; }
.obj-line1 { display: flex; align-items: center; height: 22px; padding-left: 58px; }
.obj-line2 { display: flex; align-items: center; height: 23px; margin-top: 8px; padding-left: 53px; }
.cb { width: 16px; height: 17px; background: #efefef; border: 1px solid #b8b8b8; border-radius: 3px; flex: none; }
.cb svg { display: block; width: 14px; height: 15px; }
.f { height: 22px; line-height: 21px; background: #efefef; border: 1px solid #b4b4b4; border-radius: 3px; padding-left: 3px; overflow: hidden; white-space: nowrap; }
.f-name { width: 251px; margin-left: 9px; font-weight: 600; }
.cb-static { margin-left: 5px; }
.static { margin: 0 5px 0 6px; }
.t-tag { width: 33px; }
.t-layer { margin-left: 17px; width: 48px; }
.dd { height: 22px; background: #dfdfdf; border: 1px solid #b4b4b4; border-radius: 3px; padding: 0 8px 0 4px; display: flex; justify-content: space-between; align-items: center; line-height: 20px; }
.dd-tag { width: 140px; }
.dd-layer { width: 127px; }
.comp-head { height: 26px; background: #c5c5c5; display: flex; align-items: center; padding-left: 6px; position: relative; flex: none; }
.comp-ico { width: 16px; height: 16px; margin-left: 7px; flex: none; }
.comp-title { position: absolute; left: 75px; font-weight: 600; }
.cb-t { margin-left: 8px; }
.c-help { position: absolute; right: 60px; top: 6px; width: 13px; height: 13px; }
.c-sl { position: absolute; right: 35px; top: 6px; width: 13px; height: 13px; }
.c-dots { position: absolute; right: 15px; top: 6px; width: 4px; height: 14px; }
.rt { height: 267px; padding-top: 10px; border-bottom: 1px solid #8d8d8d; }
.rt-top { display: flex; }
.preset { width: 172px; height: 87px; position: relative; flex: none; }
.pre-top { position: absolute; left: 37px; top: -2px; font-size: 13px; line-height: 18px; }
.pre-left { position: absolute; left: 8px; top: 39px; font-size: 13px; line-height: 18px; transform: rotate(-90deg); transform-origin: center; width: 18px; white-space: nowrap; display: flex; justify-content: center; }
.pre-box { position: absolute; left: 25px; top: 16px; width: 61px; height: 61px; }
.rt-grid { display: grid; width: 246px; grid-template-columns: 79px 79px 79px; column-gap: 5px; grid-template-rows: 20px 22px 23px 22px; align-content: start; }
.rt-grid .lab { align-self: center; }
.btn-pair { display: flex; margin-left: 15px; width: 64px; height: 23px; margin-top: -1px; background: #d8d8d8; border: 1px solid #b4b4b4; border-radius: 2px; }
.bp { flex: 1; display: flex; align-items: center; justify-content: center; color: #555; font-size: 13px; }
.bp + .bp { border-left: 1px solid #aaa; background: #dfdfdf; }
.anch { display: flex; align-items: center; height: 20px; margin-top: 6px; padding-left: 7px; }
.anch span { margin-left: 3px; }
.vrow { display: flex; height: 22px; align-items: center; }
.lab2 { width: 172px; padding-left: 43px; padding-top: 1px; }
.lab1 { width: 172px; padding-left: 24px; padding-top: 1px; }
.mt3 { margin-top: 3px; }
.mt5 { margin-top: 5px; }
.mt13 { margin-top: 13px; }
.xy { display: grid; grid-template-columns: 15px 64px 20px 64px; align-items: center; }
.xyz { display: grid; grid-template-columns: 19px 61px 22px 61px 22px 61px; align-items: center; }
.xy b, .xyz b { font-weight: 400; padding-left: 1px; }
.xyz b { padding-left: 4px; }
.cr-body { height: 39px; border-bottom: 1px solid #8d8d8d; padding-top: 9px; }
.prop { display: grid; grid-template-columns: 176px 242px; align-items: center; }
.pl { overflow: hidden; white-space: nowrap; padding-right: 2px; }
.p1 .pl { padding-left: 24px; padding-right: 0; }
.p1 { height: 20px; }
.p2 { height: 21px; margin-bottom: 4px; }
.p2 .pl { padding-left: 43px; }
.txt-body { padding-top: 7px; }
.txt-lab { padding-left: 24px; height: 20px; line-height: 20px; }
.textarea { position: relative; margin: 1px 7px 0 24px; width: 394px; height: 53px; background: #efefef; border: 1px solid #c4c4c4; border-radius: 3px; padding: 1px 2px; }
.ta-scribble { position: absolute; left: -1px; top: -3px; width: 66px; height: 28px; }
.sec { font-weight: 600; padding-left: 24px; height: 20px; margin: 6px 0 4px; }
.sec2 { margin: 7px 0 2px; }
.f-font { position: relative; overflow: visible; background: #eee; padding-left: 2px; }
.aa { color: #777; font-size: 12px; font-weight: 700; margin-right: 2px; letter-spacing: 0; }
.target { position: absolute; right: -5px; top: -1px; width: 22px; height: 22px; background: #e4e4e4; }
.target::after { content: ""; position: absolute; left: 5px; top: 5px; width: 11px; height: 11px; border-radius: 50%; border: 1.500px solid #555; background: radial-gradient(circle, #555 0 2px, transparent 2.500px); }
.pcb { height: 17px; margin-bottom: 8px; margin-top: 6px; }
.pcb-last { margin-bottom: 2px; }
.pcb2 { height: 17px; margin-bottom: 7px; }
.palign { height: 23px; margin-bottom: 4px; }
.aligns { display: flex; gap: 14px; }
.agrp { display: flex; width: 73px; height: 22px; border: 1px solid #b4b4b4; border-radius: 3px; background: #e2e2e2; }
.ab { flex: 1; display: flex; align-items: center; justify-content: center; border-right: 1px solid #b4b4b4; }
.ab:last-child { border-right: 0; }
.ab.on { background: #a8a8a8; }
.p-color { height: 19px; align-items: start; }
.p-color .lab1 { width: 176px; margin-top: 2px; padding-top: 0; }
.color-f { display: flex; height: 19px; background: #dedede; }
.swatch { width: 219px; height: 17px; background: #2f2f2f; border-bottom: 1px solid #fff; box-sizing: content-box; }
.dropper { margin: 3px 0 0 5px; }
.insp-foot { height: 28px; background: #c8c8c8; border-top: 1px solid #8d8d8d; display: flex; align-items: center; flex: none; padding-left: 5px; position: relative; border-bottom: 1px solid #8d8d8d; }
.foot-sel { display: flex; align-items: center; width: 163px; height: 26px; padding-left: 5px; border-left: 1px solid #a2a2a2; border-right: 1px solid #a2a2a2; }
.foot-label { font-weight: 700; font-size: 14.400px; margin-right: 4px; letter-spacing: .35px; }
.foot-lines { position: absolute; left: 172px; top: 11px; width: 244px; height: 5px; border-top: 1px solid #888; border-bottom: 1px solid #888; }
.foot-dots { position: absolute; right: 9px; top: 6px; width: 4px; height: 14px; }
```
